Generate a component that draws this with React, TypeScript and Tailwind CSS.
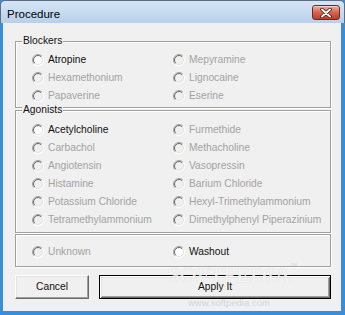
import React from "react";

const Radio = ({ enabled }: { enabled: boolean }) => (
  <svg width="12" height="12" viewBox="0 0 12 12" className="shrink-0">
    <circle cx="6" cy="6" r="4.5" fill={enabled ? "#ffffff" : "#f0f0f0"} />
    <path d="M2.111 9.889 A5.5 5.5 0 0 1 9.889 2.111" stroke="#a0a0a0" strokeWidth="1" fill="none" />
    <path d="M9.889 2.111 A5.5 5.5 0 0 1 2.111 9.889" stroke="#ffffff" strokeWidth="1" fill="none" />
    <path d="M2.818 9.182 A4.5 4.5 0 0 1 9.182 2.818" stroke="#696969" strokeWidth="1" fill="none" />
    <path d="M9.182 2.818 A4.5 4.5 0 0 1 2.818 9.182" stroke="#e3e3e3" strokeWidth="1" fill="none" />
  </svg>
);

const Opt = ({ label, enabled = false }: { label: string; enabled?: boolean }) => (
  <div className="flex h-[18px] items-center gap-[4px] whitespace-nowrap">
    <Radio enabled={enabled} />
    <span className={enabled ? "text-[#111]" : "text-[#a3a3a3]"}>{label}</span>
  </div>
);

const Group = ({
  label,
  children,
  className,
}: {
  label?: string;
  children: React.ReactNode;
  className: string;
}) => (
  <div
    className={
      "relative border border-[#a0a0a0] shadow-[inset_1px_1px_#ffffff,1px_1px_#ffffff] " + className
    }
  >
    {label && (
      <span className="absolute left-[6px] top-[-8px] bg-[#f0f0f0] px-[1px] leading-[14px] text-[#111]">
        {label}
      </span>
    )}
    {children}
  </div>
);

export default function App() {
  return (
    <div
      className="relative flex h-[315px] w-[345px] flex-col overflow-hidden bg-[#3a8ddb] text-[10.25px]"
      style={{ fontFamily: '"Liberation Sans", Arial, sans-serif' }}
    >
      {/* Title bar */}
      <div className="flex h-[23px] shrink-0 items-start justify-between rounded-t-[5px] border-l border-r border-t border-[#5b6f87] bg-gradient-to-b from-[#d6e5f5] to-[#b9d0ea] pl-[6px] pr-[4px]">
        <span className="pt-[6px] text-[11.5px] leading-[14px] text-black">Procedure</span>
        <div className="mt-[4px] flex h-[15px] w-[28px] items-center justify-center rounded-[3px] border border-[#6b2a22] bg-gradient-to-b from-[#eab0a2] via-[#d4644f] to-[#c03c2a] shadow-[inset_0_1px_#f5cfc6]">
          <svg width="12" height="10" viewBox="0 0 12 10">
            <path d="M2 1.5 L10 8.5 M10 1.5 L2 8.5" stroke="#3a1a14" strokeWidth="3.6" strokeLinecap="round" />
            <path d="M2 1.5 L10 8.5 M10 1.5 L2 8.5" stroke="#ffffff" strokeWidth="2" strokeLinecap="round" />
          </svg>
        </div>
      </div>

      {/* Client area */}
      <div className="mb-[4px] ml-[3px] mr-[4px] flex flex-1 flex-col bg-[#f0f0f0] pl-[12px] pr-[10px] pt-[18px]">
        <Group label="Blockers" className="pb-[2px] pl-[16px] pt-[9px]">
          <div className="grid grid-cols-[141px_1fr]">
            <Opt label="Atropine" enabled />
            <Opt label="Mepyramine" />
            <Opt label="Hexamethonium" />
            <Opt label="Lignocaine" />
            <Opt label="Papaverine" />
            <Opt label="Eserine" />
          </div>
        </Group>

        <Group label="Agonists" className="mt-[2px] pb-[3px] pl-[16px] pt-[10px]">
          <div className="grid grid-cols-[141px_1fr]">
            <Opt label="Acetylcholine" enabled />
            <Opt label="Furmethide" />
            <Opt label="Carbachol" />
            <Opt label="Methacholine" />
            <Opt label="Angiotensin" />
            <Opt label="Vasopressin" />
            <Opt label="Histamine" />
            <Opt label="Barium Chloride" />
            <Opt label="Potassium Chloride" />
            <Opt label="Hexyl-Trimethylammonium" />
            <Opt label="Tetramethylammonium" />
            <Opt label="Dimethylphenyl Piperazinium" />
          </div>
        </Group>

        <Group className="mt-[1px] pb-[5px] pl-[16px] pt-[8px]">
          <div className="grid grid-cols-[141px_1fr]">
            <Opt label="Unknown" />
            <Opt label="Washout" enabled />
          </div>
        </Group>

        <div className="mt-[8px] flex gap-[10px]">
          <button className="flex h-[24px] w-[74px] items-center justify-center border border-b-[#696969] border-l-white border-r-[#696969] border-t-white bg-[#f0f0f0] text-[#111] shadow-[inset_-1px_-1px_#a0a0a0,inset_1px_1px_#e3e3e3]">
            Cancel
          </button>
          <button className="flex h-[24px] w-[232px] items-center justify-center border border-black bg-[#f0f0f0] text-[#111] shadow-[inset_1px_1px_#ffffff,inset_-1px_-1px_#696969,inset_2px_2px_#e3e3e3,inset_-2px_-2px_#a0a0a0]">
            Apply It
          </button>
        </div>
      </div>

      {/* Watermark overlay */}
      <div className="pointer-events-none absolute left-[167px] top-[263px] whitespace-nowrap text-[23px] leading-[23px] text-[#f4f4f4] opacity-80 [text-shadow:0_0_1px_#d6d6d6]" style={{ fontFamily: '"Liberation Serif", serif' }}>
        SOFTPEDIA
      </div>
      <div className="pointer-events-none absolute left-[290px] top-[262px] text-[7px] leading-[7px] text-[#dadada]">™</div>
      <div className="pointer-events-none absolute left-[188px] top-[297px] whitespace-nowrap text-[9.5px] leading-[11px] text-[#d6d6d6]">
        www.softpedia.com
      </div>
    </div>
  );
}
